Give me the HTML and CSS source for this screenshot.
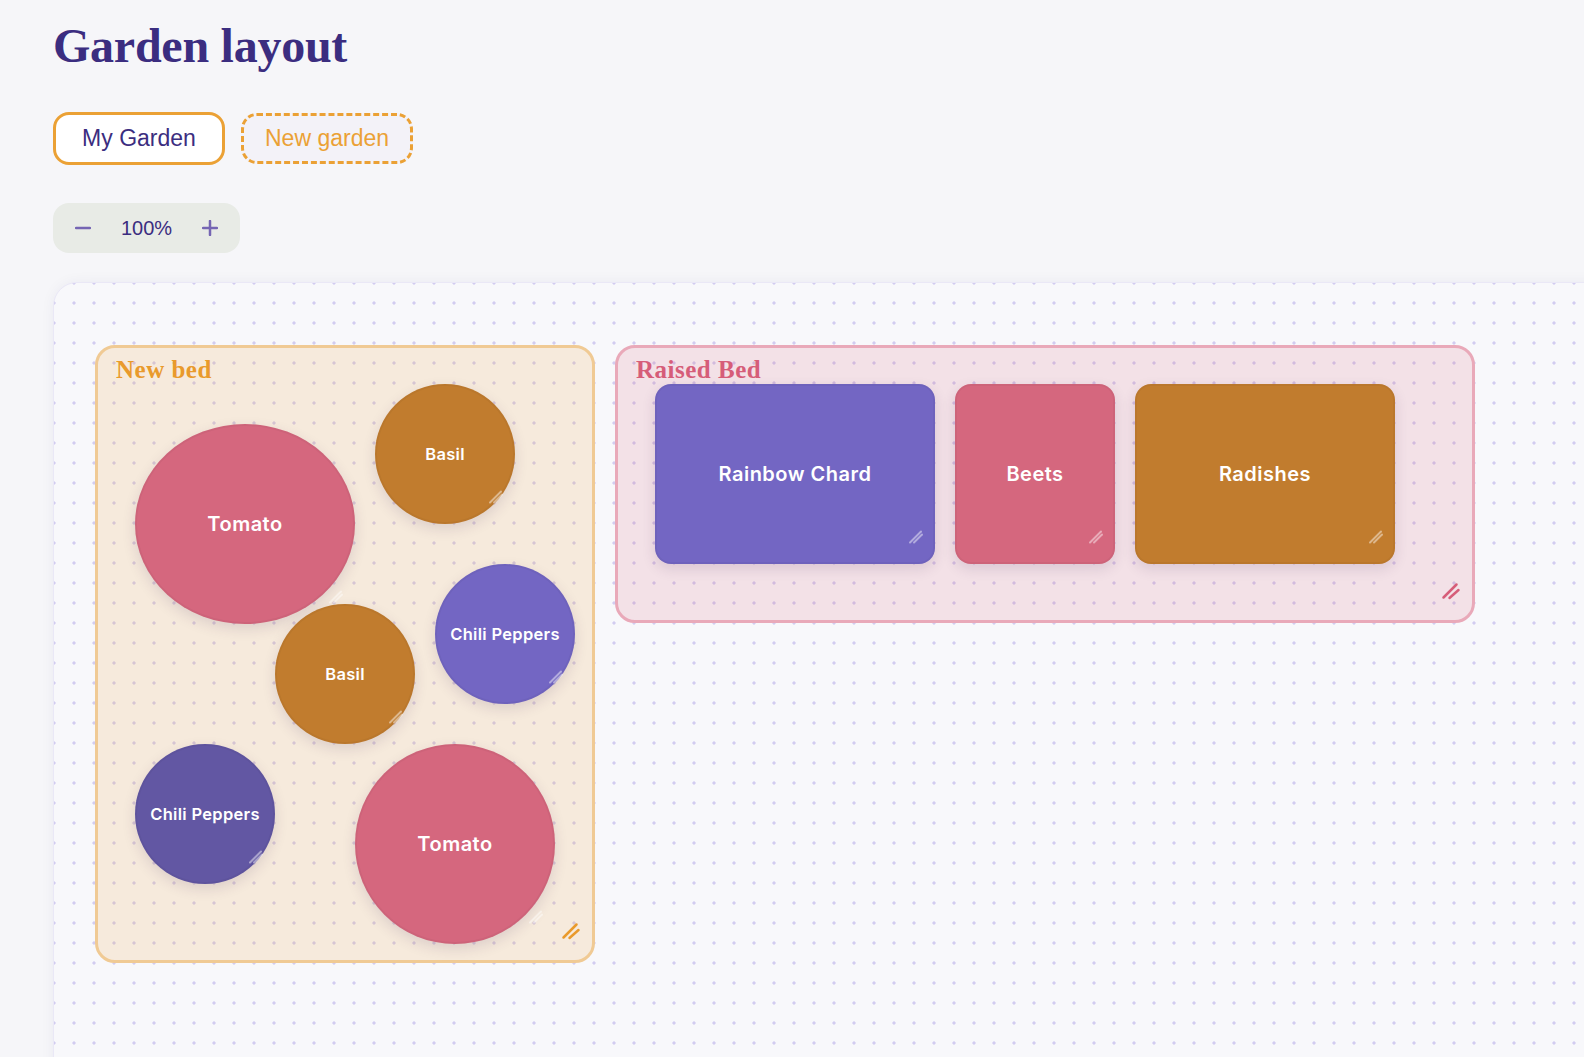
FILE: index.html
```html
<!DOCTYPE html>
<html lang="en">
<head>
  <meta charset="utf-8">
  <title>Garden layout</title>
<link rel="stylesheet" href="styles.css">
</head>

<body>
<div class="page">
  <h1>Garden layout</h1>

  <div class="gardenTabs">
    <button class="gardenTab active">My Garden</button>
    <button class="gardenTab newTab">New garden</button>
  </div>

  <div class="zoomControl">
    <button class="zoomButton" title="Zoom out">
      <svg width="16" height="16" viewBox="0 0 16 16"><line x1="1" y1="8" x2="15" y2="8"/></svg>
    </button>
    <span class="zoomValue">100%</span>
    <button class="zoomButton" title="Zoom in">
      <svg width="16" height="16" viewBox="0 0 16 16"><line x1="1" y1="8" x2="15" y2="8"/><line x1="8" y1="1" x2="8" y2="15"/></svg>
    </button>
  </div>

  <div class="canvas">

    <!-- bed 1 -->
    <div class="bed orangeBed" style="left: 41px; top: 62px; width: 500px; height: 618px;">
      <div class="bedName">New bed</div>

      <div class="plant round big tomato" style="left: 37px; top: 76px; width: 220px; height: 200px;">
        Tomato
        <svg class="grip" viewBox="0 0 16 16"><line x1="2" y1="13.5" x2="13" y2="2.5"/><line x1="6" y1="13.5" x2="14" y2="5.5"/></svg>
      </div>
      <div class="plant round small basil" style="left: 277px; top: 36px; width: 140px; height: 140px;">
        Basil
        <svg class="grip" viewBox="0 0 16 16"><line x1="2" y1="13.5" x2="13" y2="2.5"/><line x1="6" y1="13.5" x2="14" y2="5.5"/></svg>
      </div>
      <div class="plant round small basil" style="left: 177px; top: 256px; width: 140px; height: 140px;">
        Basil
        <svg class="grip" viewBox="0 0 16 16"><line x1="2" y1="13.5" x2="13" y2="2.5"/><line x1="6" y1="13.5" x2="14" y2="5.5"/></svg>
      </div>
      <div class="plant round small chili" style="left: 337px; top: 216px; width: 140px; height: 140px;">
        Chili Peppers
        <svg class="grip" viewBox="0 0 16 16"><line x1="2" y1="13.5" x2="13" y2="2.5"/><line x1="6" y1="13.5" x2="14" y2="5.5"/></svg>
      </div>
      <div class="plant round small chiliDark" style="left: 37px; top: 396px; width: 140px; height: 140px;">
        Chili Peppers
        <svg class="grip" viewBox="0 0 16 16"><line x1="2" y1="13.5" x2="13" y2="2.5"/><line x1="6" y1="13.5" x2="14" y2="5.5"/></svg>
      </div>
      <div class="plant round big tomato" style="left: 257px; top: 396px; width: 200px; height: 200px;">
        Tomato
        <svg class="grip" viewBox="0 0 16 16"><line x1="2" y1="13.5" x2="13" y2="2.5"/><line x1="6" y1="13.5" x2="14" y2="5.5"/></svg>
      </div>

      <svg class="bedGrip" viewBox="0 0 20 20"><line x1="2.5" y1="16.5" x2="15.5" y2="3.5"/><line x1="8.5" y1="17" x2="17.5" y2="9"/></svg>
    </div>

    <!-- bed 2 -->
    <div class="bed pinkBed" style="left: 561px; top: 62px; width: 860px; height: 278px;">
      <div class="bedName">Raised Bed</div>

      <div class="plant square big chili" style="left: 37px; top: 36px; width: 280px; height: 180px;">
        Rainbow Chard
        <svg class="grip" viewBox="0 0 16 16"><line x1="2" y1="13.5" x2="13" y2="2.5"/><line x1="6" y1="13.5" x2="14" y2="5.5"/></svg>
      </div>
      <div class="plant square big tomato" style="left: 337px; top: 36px; width: 160px; height: 180px;">
        Beets
        <svg class="grip" viewBox="0 0 16 16"><line x1="2" y1="13.5" x2="13" y2="2.5"/><line x1="6" y1="13.5" x2="14" y2="5.5"/></svg>
      </div>
      <div class="plant square big basil" style="left: 517px; top: 36px; width: 260px; height: 180px;">
        Radishes
        <svg class="grip" viewBox="0 0 16 16"><line x1="2" y1="13.5" x2="13" y2="2.5"/><line x1="6" y1="13.5" x2="14" y2="5.5"/></svg>
      </div>

      <svg class="bedGrip" viewBox="0 0 20 20"><line x1="2.5" y1="16.5" x2="15.5" y2="3.5"/><line x1="8.5" y1="17" x2="17.5" y2="9"/></svg>
    </div>

  </div>
</div>
</body>
</html>
```

FILE: styles.css
```css
html, body {
  margin: 0;
  overflow: hidden;
}

body {
  background: #f6f6f9;
  font-family: "Liberation Sans", Arial, sans-serif;
  color: #3b2d80;
}

.page {
  padding: 18px 0 0 53px;
}

h1 {
  font-family: "Liberation Serif", "Times New Roman", serif;
  font-size: 48px;
  line-height: 56px;
  font-weight: bold;
  letter-spacing: -0.25px;
  margin: 0;
  color: #3b2d80;
}

/* garden tabs */
.gardenTabs {
  display: flex;
  align-items: center;
  gap: 16px;
  margin-top: 38px;
}

.gardenTab {
  box-sizing: border-box;
  width: 172px;
  height: 53px;
  padding: 0;
  border: solid 3px #eba135;
  border-radius: 16px;
  background: white;
  font-family: "Liberation Sans", Arial, sans-serif;
  font-size: 23px;
  color: #3b2d80;
}

.gardenTab.newTab {
  height: 51px;
  border-style: dashed;
  background: #f3f2f8;
  color: #eba135;
}

/* zoom */
.zoomControl {
  box-sizing: border-box;
  display: flex;
  align-items: center;
  width: 187px;
  height: 50px;
  padding: 0 10px;
  margin-top: 38px;
  border-radius: 16px;
  background: #e8ebe6;
}

.zoomButton {
  display: flex;
  align-items: center;
  justify-content: center;
  width: 40px;
  height: 50px;
  padding: 0;
  border: none;
  background: none;
}

.zoomButton svg {
  stroke: #7565b3;
  stroke-width: 2.5;
  stroke-linecap: round;
}

.zoomValue {
  flex: 1;
  text-align: center;
  font-size: 20px;
  color: #3b2d80;
}

/* canvas */
.canvas {
  position: relative;
  box-sizing: border-box;
  width: 1600px;
  height: 820px;
  margin-top: 29px;
  border: solid 1px #eae8f6;
  border-radius: 24px;
  background-color: #f8f8fb;
  background-image: radial-gradient(circle, #d2ccf0 1.3px, transparent 1.9px);
  background-size: 20px 20px;
  background-position: 10px 10px;
  box-shadow: 0 0 14px rgba(40, 30, 100, 0.05);
}

.bed {
  position: absolute;
  box-sizing: border-box;
  border: solid 3px;
  border-radius: 20px;
}

.orangeBed {
  background: rgba(236, 160, 60, 0.16);
  border-color: #f0ca94;
  color: #e99a2c;
}

.pinkBed {
  background: rgba(215, 95, 120, 0.15);
  border-color: #e9a9b9;
  color: #d65d79;
}

.bedName {
  padding: 7px 18px;
  font-family: "Liberation Serif", "Times New Roman", serif;
  font-size: 25px;
  line-height: 30px;
  font-weight: bold;
  letter-spacing: 0.5px;
}

.bedGrip {
  position: absolute;
  right: 11px;
  bottom: 19px;
  width: 20px;
  height: 20px;
  stroke: currentColor;
  stroke-width: 2.5;
  stroke-linecap: round;
}

/* plants */
.plant {
  position: absolute;
  display: flex;
  align-items: center;
  justify-content: center;
  color: white;
  font-family: Inter, "Open Sans", sans-serif;
  font-weight: 600;
  box-shadow: inset 0 0 0 2px rgba(0, 0, 0, 0.035), 0 5px 14px rgba(70, 40, 90, 0.14);
}

.plant.round {
  border-radius: 50%;
}

.plant.square {
  border-radius: 16px;
}

.plant.big {
  font-size: 20px;
  letter-spacing: 0.5px;
}

.plant.small {
  font-size: 16.5px;
  letter-spacing: 0.3px;
}

.tomato {
  background: #d5677e;
}

.basil {
  background: #c17c2e;
}

.chili {
  background: #7366c3;
}

.chiliDark {
  background: #6257a3;
}

.grip {
  position: absolute;
  right: 11px;
  bottom: 19px;
  width: 16px;
  height: 16px;
  stroke: rgba(255, 255, 255, 0.45);
  stroke-width: 2;
  stroke-linecap: round;
}
```
